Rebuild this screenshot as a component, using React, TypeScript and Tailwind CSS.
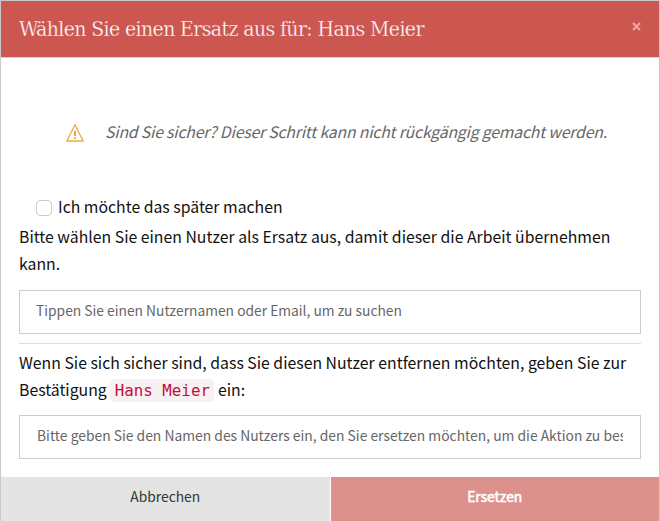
import React from 'react';

const Warning = () => (
  <svg width="18" height="18" viewBox="0 0 18 18" className="shrink-0" fill="none">
    <path d="M9 0.8 L17.2 17 H0.8 Z" stroke="#e8ab3f" strokeWidth="1.3" strokeLinejoin="round" />
    <path d="M9 6.8 V12 M9 13.3 V15.1" stroke="#e0a030" strokeWidth="1.8" />
  </svg>
);

export default function App() {
  return (
    <div className="flex h-[521px] w-[660px] flex-col overflow-hidden border-x border-t border-[#c9c9c9] bg-white font-['Noto_Sans_CJK_SC',sans-serif] text-[15.8px] leading-[26.5px] text-[#111]">
      <header className="flex h-[57px] shrink-0 items-center justify-between border-b border-[#ecc4c2] bg-[#cb5750] pr-[18px] pl-[18px]">
        <h1 className="font-['DejaVu_Serif_Condensed','DejaVu_Serif',serif] text-[21px] tracking-[-0.6px] whitespace-nowrap text-white [-webkit-text-stroke:0.3px_#cb5750]">
          <span>Wählen Sie einen Ersatz aus für: Hans Meier</span>
        </h1>
        <button aria-label="Schließen" className="mb-[6px]">
          <svg width="9" height="9" viewBox="0 0 9 9" className="block">
            <path d="M1 1 L8 8 M8 1 L1 8" stroke="#e7aeaa" strokeWidth="1.9" />
          </svg>
        </button>
      </header>
      <main className="flex h-[419px] shrink-0 flex-col px-[18px]">
        <div className="mt-[62px] flex items-center pl-[47px] text-[#666]">
          <Warning />
          <em className="-mt-[1px] ml-[21px] tracking-[-0.19px] whitespace-nowrap"><span>Sind Sie sicher? Dieser Schritt kann nicht rückgängig gemacht werden.</span></em>
        </div>
        <label className="mt-[48px] flex items-center pl-[17px]">
          <span className="mt-[3px] h-4 w-4 rounded-[4px] border border-[#ccc] bg-white" />
          <span className="ml-[6px]">Ich möchte das später machen</span>
        </label>
        <p className="mt-[4px] whitespace-nowrap"><span>Bitte wählen Sie einen Nutzer als Ersatz aus, damit dieser die Arbeit übernehmen</span><br />kann.</p>
        <div className="mt-[13px] flex h-[44px] shrink-0 items-center border border-[#ccc] px-[16px] text-[13.8px] text-[#666]">
          <span className="-mt-[3px]">Tippen Sie einen Nutzernamen oder Email, um zu suchen</span>
        </div>
        <hr className="mt-[9px] border-[#ddd]" />
        <p className="mt-[6px] whitespace-nowrap">
          <span>Wenn Sie sich sicher sind, dass Sie diesen Nutzer entfernen möchten, geben Sie zur</span><br />
          <span>Bestätigung </span><code className="rounded-[4px] bg-[#f8f1f3] px-[4.5px] py-[2px] font-['DejaVu_Sans_Mono',monospace] text-[15.8px] text-[#bd1038]">Hans Meier</code> ein:
        </p>
        <div className="mt-[11px] flex h-[44px] shrink-0 items-center border border-[#ccc] px-[17px] text-[13.87px] text-[#666]">
          <span className="-mt-[3px] overflow-hidden whitespace-nowrap">Bitte geben Sie den Namen des Nutzers ein, den Sie ersetzen möchten, um die Aktion zu bestätigen</span>
        </div>
      </main>
      <footer className="grid h-[45px] shrink-0 grid-cols-2 gap-px text-[13.8px]">
        <button className="bg-[#e4e4e4] pb-[6px] text-[#333]">Abbrechen</button>
        <button className="bg-[#dd918c] pb-[6px] text-white [-webkit-text-stroke:0.6px_white]">Ersetzen</button>
      </footer>
    </div>
  );
}
